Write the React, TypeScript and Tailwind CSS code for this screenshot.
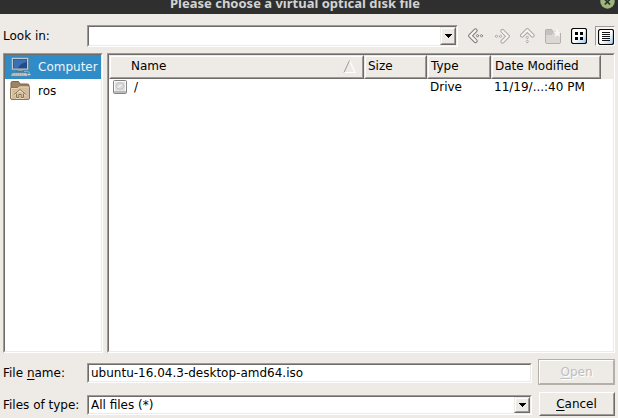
import React from 'react';

const sunken =
  'border border-t-[#9d9a97] border-l-[#9d9a97] border-r-white border-b-white bg-white';
const sunkenInner =
  'border border-t-[#6e6b69] border-l-[#6e6b69] border-r-[#eeebe7] border-b-[#eeebe7]';

function Field({ className, children }: { className: string; children?: React.ReactNode }) {
  return (
    <div className={`${sunken} ${className}`}>
      <div className={`${sunkenInner} flex h-full items-center justify-between`}>{children}</div>
    </div>
  );
}

function DropButton() {
  return (
    <div className="h-full w-4 border border-t-[#eeebe7] border-l-[#eeebe7] border-r-[#6e6b69] border-b-[#6e6b69] bg-[#eeebe7]">
      <div className="flex h-full items-center justify-center border border-t-white border-l-white border-r-[#9d9a97] border-b-[#9d9a97]">
        <svg width="7" height="4" viewBox="0 0 7 4" shapeRendering="crispEdges">
          <path d="M0 0h7v1H6v1H5v1H4v1H3V3H2V2H1V1H0z" fill="#000" />
        </svg>
      </div>
    </div>
  );
}

function Arrow({ rotate, tone }: { rotate: number; tone: string }) {
  return (
    <svg width="16" height="16" viewBox="0 0 16 16">
      <g transform={`rotate(${rotate} 8 8)`} strokeLinecap="round" strokeLinejoin="round" fill="none">
        <path d="M7.5 2.5L2.3 7.7L7.500 12.900" stroke={tone} strokeWidth="4.200" />
        <path d="M7.500 2.500L2.300 7.700L7.500 12.900" stroke="#f4f3f1" strokeWidth="2.300" />
        <circle cx="9.500" cy="7.700" r="1.100" stroke={tone} fill="#f4f3f1" strokeWidth=".9" />
        <circle cx="13.500" cy="7.700" r="1.100" stroke={tone} fill="#f4f3f1" strokeWidth=".9" />
      </g>
    </svg>
  );
}

function NewFolder() {
  return (
    <svg width="17" height="16" viewBox="0 0 17 16">
      <path d="M.5 14V2.500Q.5 1.500 1.500 1.500h5l1.500 2h6.500q1 0 1 1V14q0 1.500-1.500 1.500H2Q.5 15.500.5 14z" fill="#c4c2bf" stroke="#b3b0ad" />
      <path d="M1 7h5.500l1.500-1.500h7V14q0 1-1 1H2q-1 0-1-1z" fill="#dad7d4" />
      <path d="M12.300.5l1.300 2.800 3.200.3-2.400 2.200.8 3.100-2.900-1.600-2.800 1.600.8-3.100-2.400-2.200 3.100-.3z" fill="#f7f6f4" />
    </svg>
  );
}

function ViewIcon({ kind }: { kind: 'grid' | 'list' }) {
  return (
    <svg width="16" height="16" viewBox="0 0 16 16">
      <defs>
        <linearGradient id={kind} x1="0" y1="0" x2="1" y2="1">
          <stop offset=".5" stopColor="#fff" />
          <stop offset="1" stopColor="#9cc6ec" />
        </linearGradient>
      </defs>
      <rect x=".5" y=".5" width="15" height="15" rx="2" fill={`url(#${kind})`} stroke="#080808" strokeWidth="1.200" />
      {kind === 'grid' ? (
        <path d="M4 4h3v3H4zM9 4h3v3H9zM4 9h3v3H4zM9 9h3v3H9z" fill="#000" />
      ) : (
        <path d="M4 3.500h8M4 5.500h8M4 7.500h8M4 9.500h8M4 11.500h8" stroke="#151515" />
      )}
    </svg>
  );
}

function ComputerIcon() {
  return (
    <svg width="21" height="20" viewBox="0 0 21 20">
      <path d="M8 12.500h5V15H8z" fill="#a7aaa5" />
      <rect x="1.500" y=".5" width="17" height="12.500" rx="1" fill="#c4cacb" stroke="#73818a" strokeWidth=".8" />
      <rect x="3" y="2" width="14" height="9.500" fill="#1f4c8c" />
      <path d="M3.500 2.500h13v2.500Q10 6.500 8 11H3.500z" fill="#3a70b4" />
      <path d="M6 14h9l1 1.200H5z" fill="#667177" />
      <path d="M2.500 16h14l1.200 3H.8z" fill="#d9dad6" stroke="#7c868a" strokeWidth=".6" />
      <path d="M3 17h12M2.500 18h13" stroke="#92968f" strokeWidth=".6" strokeDasharray="1.500 .5" />
      <path d="M14 14.500q6-.500 5.500 2" fill="none" stroke="#a9b7bd" strokeWidth=".8" />
      <ellipse cx="19" cy="17.500" rx="1.700" ry="1.100" fill="#d9dad6" stroke="#7d868a" strokeWidth=".5" />
    </svg>
  );
}

function HomeIcon() {
  return (
    <svg width="20" height="20" viewBox="0 0 20 20">
      <path d="M1 9V2Q1 .5 2.500.5h6L10 3h7.500Q19 3 19 4.500V9z" fill="#a0835f" stroke="#79624a" />
      <path d="M.5 7.500Q.5 6.500 2 6.500h5.500l2-1.500H18q1.500 0 1.500 1.500V17q0 1.500-1.500 1.500H2Q.5 18.500.5 17z" fill="#d2bc9b" stroke="#8d7658" />
      <path d="M1.500 17V7.500h6.300l2-1.500h8.700" fill="none" stroke="#e6d7bf" />
      <path d="M4.200 13.500L10 8.500l5.800 5M6.500 12.500v4h2.300v-3h2.400v3h2.300v-4" fill="none" stroke="#f0e6d5" strokeWidth="1.100" transform="translate(0 .8)" />
      <path d="M4.200 13.500L10 8.500l5.800 5M6.500 12.500v4h2.300v-3h2.400v3h2.300v-4" fill="none" stroke="#8c7354" strokeWidth="1" />
    </svg>
  );
}

function DriveIcon() {
  return (
    <svg width="14" height="14" viewBox="0 0 14 14">
      <rect x=".5" y=".5" width="13" height="13" rx="1" fill="#e2e2e2" stroke="#858585" />
      <path d="M1.500 11V1.500h11V11" fill="none" stroke="#fafafa" />
      <ellipse cx="7" cy="6" rx="4" ry="3.400" fill="#dadada" stroke="#bcbcbc" strokeWidth=".8" />
      <path d="M4.500 7.500l4-2.500" stroke="#f6f6f6" strokeWidth="1.200" />
      <path d="M1 12h12" stroke="#adadad" strokeWidth="1.500" />
    </svg>
  );
}

function HeaderCell({ className, children }: { className: string; children: React.ReactNode }) {
  return (
    <div className={`h-6 border border-t-[#eeebe7] border-l-[#eeebe7] border-r-[#6e6b69] border-b-[#6e6b69] ${className}`}>
      <div className="flex h-full items-center justify-between border border-t-white border-l-white border-r-[#9d9a97] border-b-[#9d9a97] pb-[2px]">
        {children}
      </div>
    </div>
  );
}

export default function App() {
  return (
    <div className="h-[418px] w-[618px] overflow-hidden bg-[#eeebe7] font-['DejaVu_Sans',sans-serif] text-[12px] leading-[14px] whitespace-nowrap text-black">
      <div className="relative flex h-[14px] justify-center bg-[#2f2f2f] pr-[28px]">
        <div className="-mt-[6px] font-['Noto_Sans',sans-serif] text-[13px] leading-[18px] font-bold text-[#d3d3d3]">
          Please choose a virtual optical disk file
        </div>
        <svg className="absolute -top-[6px] left-[600px]" width="15" height="15" viewBox="0 0 15 15">
          <circle cx="7.500" cy="7.500" r="7.200" fill="#9ab87c" />
          <path d="M4.800 5.300l5.200 5.200M10 5.300l-5.200 5.200" stroke="#2f2f2f" strokeWidth="1.700" />
        </svg>
      </div>

      <div className="flex h-[39px] pt-[11px]">
        <div className="w-[87px] pt-1 pl-[3px]">Look in:</div>
        <Field className="h-[22px] w-[371px]">
          <span />
          <DropButton />
        </Field>
        <div className="mt-[3px] ml-[10px] flex h-4">
          <Arrow rotate={0} tone="#7c7a78" />
          <div className="ml-[10px]"><Arrow rotate={180} tone="#aaa8a5" /></div>
          <div className="ml-[9px]"><Arrow rotate={90} tone="#aaa8a5" /></div>
          <div className="ml-[10px]"><NewFolder /></div>
          <div className="ml-[9px]"><ViewIcon kind="grid" /></div>
        </div>
        <div className="mt-px ml-[8px] h-5 w-5 border border-t-[#9d9a97] border-l-[#9d9a97] border-r-white border-b-white bg-[#f5f3f1] pt-[2px] pl-[2px]">
          <ViewIcon kind="list" />
        </div>
      </div>

      <div className="flex h-[300px] pl-[3px]">
        <div className={`${sunken} w-[100px]`}>
          <div className={`${sunkenInner} h-full`}>
            <div className="flex h-6 items-center bg-[#308cc6] pl-[5px] text-[#eef5fa]">
              <ComputerIcon />
              <span className="ml-[7px]">Computer</span>
            </div>
            <div className="flex h-6 items-center pl-[5px]">
              <HomeIcon />
              <span className="ml-[8px]">ros</span>
            </div>
          </div>
        </div>
        <div className={`${sunken} ml-[4px] w-[508px]`}>
          <div className={`${sunkenInner} h-full`}>
            <div className="flex bg-[#eeebe7]">
              <HeaderCell className="w-[255px]">
                <span className="pl-5">Name</span>
                <svg className="mr-[6px]" width="13" height="13" viewBox="0 0 13 13">
                  <path d="M6.500.5L12 12.500H1" fill="none" stroke="#fff" strokeWidth="1.200" />
                  <path d="M1 12.500L6.500.5" stroke="#9d9a97" />
                </svg>
              </HeaderCell>
              <HeaderCell className="w-[63px]"><span className="pl-[2px]">Size</span></HeaderCell>
              <HeaderCell className="w-[64px]"><span className="pl-[2px]">Type</span></HeaderCell>
              <HeaderCell className="w-[110px]"><span className="pl-[2px]">Date Modified</span></HeaderCell>
            </div>
            <div className="flex h-4 items-center">
              <div className="flex w-[321px] items-center pl-1">
                <DriveIcon />
                <span className="ml-[7px]">/</span>
              </div>
              <div className="w-[64px]">Drive</div>
              <div>11/19/...:40 PM</div>
            </div>
          </div>
        </div>
      </div>

      <div className="flex h-[65px] pt-[6px]">
        <div className="w-[87px] pl-[3px]">
          <div className="mt-[7px]">File <u className="underline-offset-2">n</u>ame:</div>
          <div className="mt-[18px]">Files of type:</div>
        </div>
        <div className="w-[445px] pt-[4px]">
          <Field className="h-5 w-[445px]">
            <span className="pl-[2px]">ubuntu-16.04.3-desktop-amd64.iso</span>
          </Field>
          <Field className="mt-[12px] h-5 w-[445px]">
            <span className="pl-[2px]">All files (*)</span>
            <DropButton />
          </Field>
        </div>
        <div className="ml-[6px] w-[77px]">
          <div className="h-[26px] border border-[#b5afa9] bg-[#eeebe7]">
            <div className="flex h-full items-center justify-center border border-t-white border-l-white border-r-[#b5afa9] border-b-[#b5afa9] text-[#bebebe] [text-shadow:1px_1px_0_#fff]">
              <span><u className="underline-offset-2">O</u>pen</span>
            </div>
          </div>
          <div className="mt-[7px] ml-px h-6 w-[76px] border border-t-white border-l-white border-r-[#6e6b69] border-b-[#6e6b69]">
            <div className="flex h-full items-center justify-center border border-t-[#eeebe7] border-l-[#eeebe7] border-r-[#9d9a97] border-b-[#9d9a97]">
              <span className="-mt-px mr-px"><u className="underline-offset-2">C</u>ancel</span>
            </div>
          </div>
        </div>
      </div>
    </div>
  );
}
